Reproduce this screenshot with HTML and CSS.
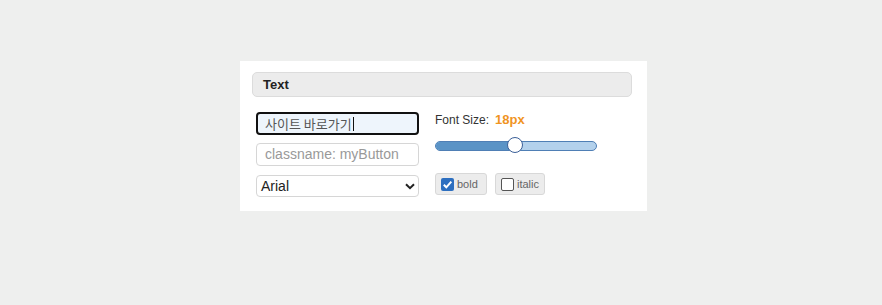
FILE: index.html
```html
<!DOCTYPE html>
<html>
<head>
<meta charset="utf-8">
<link rel="stylesheet" href="styles.css">
</head>
<body>
<div class="panel">
  <div class="header">Text</div>
  <div class="body">
    <div class="col-left">
      <div class="field focused">사이트 바로가기<span class="caret"></span></div>
      <div class="field placeholder">classname: myButton</div>
      <div class="field select">Arial
        <svg class="chev" width="10" height="7" viewBox="0 0 10 7"><path d="M1 1.2 L5 5.2 L9 1.2" fill="none" stroke="#222" stroke-width="2"/></svg>
      </div>
    </div>
    <div class="col-right">
      <div class="size-row"><span class="size-label">Font Size:</span><span class="size-val">18px</span></div>
      <div class="slider">
        <div class="range" style="width:78px"></div>
        <div class="thumb" style="left:71px"></div>
      </div>
      <div class="toggles">
        <div class="toggle bold-btn"><span class="box checked"><svg width="13" height="13" viewBox="0 0 13 13"><path d="M2.8 6.8 L5.3 9.3 L10.3 3.6" fill="none" stroke="#fff" stroke-width="2"/></svg></span>bold</div>
        <div class="toggle italic-btn"><span class="box"></span>italic</div>
      </div>
    </div>
  </div>
</div>
</body>
</html>
```

FILE: styles.css
```css
html, body {
  margin: 0;
  padding: 0;
  background: #eeefee;
  font-family: "Liberation Sans", Arial, "Noto Sans CJK KR", sans-serif;
}
body {
  padding-top: 61px;
  padding-left: 240px;
}
.panel {
  width: 407px;
  height: 150px;
  background: #fff;
  box-sizing: border-box;
  padding: 11px 15px 0 12px;
}
.header {
  height: 25px;
  box-sizing: border-box;
  background: #ececec;
  border: 1px solid #dcdcdc;
  border-radius: 5px;
  padding-left: 10px;
  font-size: 13px;
  font-weight: bold;
  color: #222;
  line-height: 23px;
}
.body {
  display: flex;
  padding: 15px 0 0 4px;
}
.col-left {
  width: 163px;
  display: flex;
  flex-direction: column;
  gap: 8px;
}
.field {
  height: 23px;
  box-sizing: border-box;
  border: 1px solid #d6d6d6;
  border-radius: 4px;
  font-size: 14px;
  line-height: 21px;
  padding-left: 8px;
  color: #333;
  position: relative;
  background: #fff;
}
.focused {
  border: 2px solid #111;
  background: #eef5fc;
  color: #555;
  line-height: 19px;
  padding-left: 7px;
  font-family: "Noto Sans CJK KR", sans-serif;
  font-size: 13px;
}
.caret {
  display: inline-block;
  width: 1px;
  height: 14px;
  background: #111;
  vertical-align: -2px;
  margin-left: 1px;
}
.placeholder {
  color: #999;
}
.select {
  height: 22px;
  line-height: 20px;
  padding-left: 4px;
  color: #222;
  margin-top: 1px;
}
.chev {
  position: absolute;
  right: 3px;
  top: 7px;
}
.col-right {
  margin-left: 16px;
  display: flex;
  flex-direction: column;
}
.size-row {
  height: 16px;
  display: flex;
  align-items: baseline;
}
.size-label {
  font-size: 12px;
  color: #333;
}
.size-val {
  font-size: 13px;
  font-weight: bold;
  color: #f0941f;
  margin-left: 6px;
}
.slider {
  position: relative;
  width: 162px;
  height: 10px;
  box-sizing: border-box;
  margin-top: 13px;
  background: #b3d1ec;
  border: 1px solid #4f7fb5;
  border-radius: 5px;
}
.range {
  position: absolute;
  left: 0;
  top: 0;
  bottom: 0;
  background: #5a93c6;
  border-radius: 5px 0 0 5px;
}
.thumb {
  position: absolute;
  top: -5px;
  width: 14px;
  height: 14px;
  border: 1px solid #3a5f98;
  border-radius: 50%;
  background: #fff;
}
.toggles {
  display: flex;
  gap: 8px;
  margin-top: 22px;
}
.toggle {
  height: 22px;
  box-sizing: border-box;
  background: #ececec;
  border: 1px solid #d8d8d8;
  border-radius: 3px;
  display: flex;
  align-items: center;
  padding-left: 5px;
  font-size: 11px;
  color: #666;
}
.bold-btn {
  width: 52px;
}
.italic-btn {
  width: 50px;
}
.box {
  width: 13px;
  height: 13px;
  box-sizing: border-box;
  border: 1px solid #555;
  border-radius: 2px;
  background: #fff;
  margin-right: 3px;
  display: flex;
  flex-shrink: 0;
}
.box.checked {
  border: none;
  background: #2d6fc0;
}
```
